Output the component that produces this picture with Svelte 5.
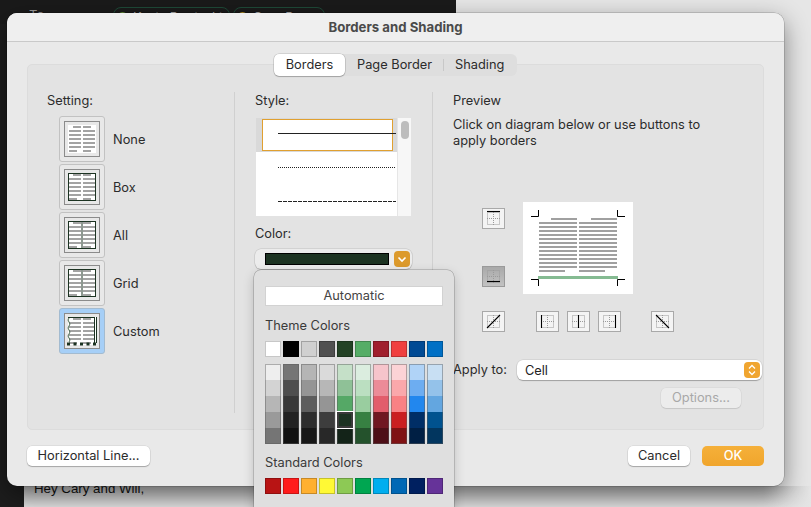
<script lang="ts">
  // Word's Borders and Shading sheet, with the colour popover left open.
  const settings = ["None", "Box", "All", "Grid", "Custom"];

  const theme = ["#ffffff", "#000000", "#d0d0d0", "#505050", "#234225", "#55ad66", "#a01f2d", "#f04040", "#004a94", "#0070c5"];
  const standard = ["#b81414", "#ff1c1c", "#ffb030", "#fff935", "#8dc955", "#00a651", "#00aeef", "#0068b5", "#002060", "#663399"];

  // one array per column, light to dark
  const shades = [
    ["#eeeeee", "#d3d3d3", "#b6b6b6", "#9a9a9a", "#757575"],
    ["#757575", "#4e4e4e", "#383838", "#222222", "#111111"],
    ["#b5b5b5", "#959595", "#5d5d5d", "#2d2d2d", "#171717"],
    ["#dadada", "#b7b7b7", "#959595", "#3d3d3d", "#282828"],
    ["#c5e0c8", "#8fc197", "#55a866", "#1c3322", "#132318"],
    ["#dbeddf", "#bbdfc1", "#99cd9f", "#378042", "#24522c"],
    ["#f6c4cb", "#ec8b98", "#e25d6c", "#701722", "#4d0f17"],
    ["#fcd3d6", "#fba8ab", "#f98184", "#ca1f21", "#7f1214"],
    ["#b0d3f7", "#6dadf1", "#2287ee", "#002e66", "#001f44"],
    ["#c8dff3", "#94c2ea", "#63a6e0", "#00528f", "#02365f"],
  ];

  const bottomButtons = [
    { kind: "diagUp", gap: 31 },
    { kind: "left", gap: 8 },
    { kind: "center", gap: 8 },
    { kind: "right", gap: 30 },
    { kind: "diagDown", gap: 0 },
  ];

  const previewRows = Array.from({ length: 12 }, (_, i) => 20 + i * 4);
  const iconRows = [1, 2, 3, 4, 5];
</script>

{#snippet pageIcon(kind: string)}
  <svg class="page-icon" width="36" height="36" viewBox="0 0 36 36">
    <rect x="0.5" y="0.5" width="35" height="35" fill="#e8e8e8" stroke="#8b8b8b" />
    <rect x="4" y="4" width="28" height="28" fill="#fff" />
    <g fill="#a3a3a3">
      <rect x="9" y="5" width="8" height="2" />
      <rect x="19" y="5" width="8" height="2" />
      {#each iconRows as n}
        <rect x="5" y={5 + n * 4} width="12" height="2" />
        <rect x="19" y={5 + n * 4} width="12" height="2" />
      {/each}
      <rect x="5" y="29" width="8" height="2" />
      <rect x="19" y="29" width="8" height="2" />
    </g>
    {#if kind === "Box" || kind === "All" || kind === "Grid"}
      <rect x="4.500" y="4.500" width="27" height="27" fill="none" stroke="#1c3322" />
    {/if}
    {#if kind === "All" || kind === "Grid"}
      <line x1="18" y1="4" x2="18" y2="32" stroke="#1c3322" />
    {/if}
    {#if kind === "Custom"}
      <line x1="4" y1="4.500" x2="31" y2="4.500" stroke="#1c3322" />
      <line x1="30.500" y1="4" x2="30.500" y2="30" stroke="#1c3322" />
      <line x1="32.500" y1="4" x2="32.500" y2="30" stroke="#1c3322" />
      <path d="M5 5q-2 2 0 4t0 4 0 4 0 4 0 4 0 4" fill="none" stroke="#4a6a50" />
      <line x1="3" y1="31" x2="32" y2="31" stroke="#1c3322" stroke-width="3" stroke-dasharray="3 3.500" />
    {/if}
  </svg>
{/snippet}

{#snippet borderIcon(kind: string)}
  <svg width="21" height="19" viewBox="0 0 21 19">
    <g fill="none" stroke="#9a9a9a" stroke-dasharray="1 1">
      <rect x="4.500" y="3.500" width="12" height="12" />
      <line x1="10.500" y1="3" x2="10.500" y2="16" />
      <line x1="4" y1="9.500" x2="17" y2="9.500" />
    </g>
    <g stroke="#000" stroke-width="1.100" fill="none">
      {#if kind === "top"}<line x1="4" y1="2.500" x2="17" y2="2.500" />{/if}
      {#if kind === "bottom"}<line x1="4" y1="14.500" x2="17" y2="14.500" />{/if}
      {#if kind === "left"}<line x1="4.500" y1="3" x2="4.500" y2="16" />{/if}
      {#if kind === "center"}<line x1="10.500" y1="3" x2="10.500" y2="16" />{/if}
      {#if kind === "right"}<line x1="16.500" y1="3" x2="16.500" y2="16" />{/if}
      {#if kind === "diagUp"}<line x1="4" y1="16" x2="17" y2="3" />{/if}
      {#if kind === "diagDown"}<line x1="4" y1="3" x2="17" y2="16" />{/if}
    </g>
  </svg>
{/snippet}

<div class="desktop">
  <div class="mail">
    <div class="mail-head">
      <span class="to">To:</span>
      <span class="chip wide"><i class="dot green"></i>Kevin Petrinski</span>
      <span class="chip"><i class="dot yellow"></i>Cary Power</span>
    </div>
    <div class="mail-body">Hey Cary and Will,</div>
  </div>

  <div class="window">
    <div class="title">Borders and Shading</div>

    <div class="content">
      <div class="tabs">
        <span class="tab active">Borders</span>
        <span class="tab">Page Border</span>
        <i class="tab-sep"></i>
        <span class="tab">Shading</span>
      </div>

      <div class="panel">
        <section class="col col-setting">
          <div class="heading">Setting:</div>
          <div class="settings">
            {#each settings as s}
              <div class="setting">
                <div class="setting-btn" class:on={s === "Custom"}>
                  {@render pageIcon(s)}
                </div>
                <span>{s}</span>
              </div>
            {/each}
          </div>
        </section>

        <section class="col col-style">
          <div class="heading">Style:</div>
          <div class="style-list">
            <div class="style-lines">
              <div class="style-row first"><i class="rule solid"></i></div>
              <div class="style-row"><i class="rule dotted"></i></div>
              <div class="style-row"><i class="rule dashed"></i></div>
            </div>
            <div class="scrollbar"><i></i></div>
          </div>
          <div class="heading color-label">Color:</div>
          <div class="color-select">
            <i class="color-well"></i>
            <span class="select-arrow">
              <svg width="10" height="7" viewBox="0 0 10 7"><path d="M1.500 1.500 5 5l3.500-3.500" fill="none" stroke="#fff" stroke-width="1.600" /></svg>
            </span>
          </div>
        </section>

        <section class="col col-preview">
          <div class="heading">Preview</div>
          <p class="hint">Click on diagram below or use buttons to apply borders</p>

          <div class="diagram">
            <div class="side-buttons">
              <div class="border-btn">{@render borderIcon("top")}</div>
              <div class="border-btn pressed">{@render borderIcon("bottom")}</div>
            </div>
            <svg class="sheet" width="110" height="92" viewBox="0 0 110 92">
              <rect width="110" height="92" fill="#fff" />
              <g fill="#a0a0a0">
                <rect x="28" y="16" width="26" height="2" />
                <rect x="68" y="16" width="26" height="2" />
                {#each previewRows as y}
                  <rect x="16" {y} width="38" height="2" />
                  <rect x="56" {y} width="38" height="2" />
                {/each}
                <rect x="16" y="68" width="26" height="2" />
                <rect x="56" y="68" width="26" height="2" />
              </g>
              <rect x="15" y="74" width="80" height="3" fill="#85bb92" />
              <path d="M8 14.500h7.500V8M102 14.500h-7.500V8M8 77.500h7.500V84M102 77.500h-7.500V84" fill="none" stroke="#000" />
            </svg>
          </div>

          <div class="bottom-buttons">
            {#each bottomButtons as b}
              <div class="border-btn" style="margin-right: {b.gap}px">{@render borderIcon(b.kind)}</div>
            {/each}
          </div>

          <div class="apply">
            <span>Apply to:</span>
            <div class="apply-select">
              <span>Cell</span>
              <span class="select-arrow bright">
                <svg width="8" height="12" viewBox="0 0 8 12"><path d="M1 4.500 4 1.500l3 3M1 7.500l3 3 3-3" fill="none" stroke="#fff" stroke-width="1.300" /></svg>
              </span>
            </div>
          </div>
          <div class="options-row"><span class="btn options">Options...</span></div>
        </section>
      </div>

      <div class="footer">
        <span class="btn hline">Horizontal Line...</span>
        <span class="spacer"></span>
        <span class="btn cancel">Cancel</span>
        <span class="btn ok">OK</span>
      </div>
    </div>

    <div class="popover">
      <div class="auto">Automatic</div>
      <div class="pop-label">Theme Colors</div>
      <div class="swatches">
        {#each theme as c}
          <i class="swatch" style="background: {c}"></i>
        {/each}
      </div>
      <div class="shades">
        {#each shades as col, x}
          <div class="shade-col">
            {#each col as c, y}
              <i class="shade" class:picked={x === 4 && y === 3} style="background: {c}"></i>
            {/each}
          </div>
        {/each}
      </div>
      <div class="pop-label std">Standard Colors</div>
      <div class="swatches">
        {#each standard as c}
          <i class="swatch" style="background: {c}"></i>
        {/each}
      </div>
    </div>
  </div>
</div>

<style>
  :global(body) {
    margin: 0;
    background: #e4e4e4;
  }
  * {
    box-sizing: border-box;
  }
  i {
    display: block;
    font-style: normal;
  }
  .desktop {
    position: relative;
    width: 811px;
    height: 507px;
    overflow: hidden;
    font-family: Inter, "Noto Sans", sans-serif;
    font-size: 12.800px;
    color: #2b2b2b;
    background: #e6e6e6;
  }

  /* the mail window behind the sheet */
  .mail {
    width: 456px;
    height: 100%;
    display: flex;
    flex-direction: column;
    background: #1d1d1d;
  }
  .mail-head {
    height: 24px;
    display: flex;
    align-items: flex-start;
    gap: 3px;
    padding: 7px 0 0 29px;
    background: #1a1a1a;
    color: #999;
  }
  .to {
    width: 81px;
    font-size: 13px;
  }
  .chip {
    width: 92px;
    height: 20px;
    display: flex;
    align-items: center;
    gap: 5px;
    padding-left: 3px;
    border: 1px solid #1e4a38;
    border-radius: 8px;
    color: #bbb;
    white-space: nowrap;
    overflow: hidden;
  }
  .chip.wide {
    width: 117px;
  }
  .dot {
    width: 11px;
    height: 11px;
    flex: none;
    border-radius: 50%;
  }
  .green {
    background: #6b9b3a;
  }
  .yellow {
    background: #c9a227;
  }
  /* only the last 21px show below the sheet; the tight line-height keeps the
     text cut off by the sheet's bottom edge, like in the real window */
  .mail-body {
    margin: auto 0 0 24px;
    height: 21px;
    width: 787px;
    flex: none;
    padding-left: 10px;
    line-height: 5px;
    color: #111;
    font-family: "Liberation Sans", sans-serif;
    font-size: 13.300px;
    background:
      linear-gradient(to right, transparent 94%, #e4e4e4),
      linear-gradient(#b4b4b4, #dedede);
  }

  .window {
    position: absolute;
    left: 7px;
    top: 13px;
    width: 777px;
    height: 473px;
    background: #e9e9e9;
    border-radius: 10px;
    box-shadow: 0 8px 24px rgba(0, 0, 0, 0.45), 0 0 0 0.5px rgba(0, 0, 0, 0.25);
  }
  .title {
    height: 29px;
    display: flex;
    align-items: center;
    justify-content: center;
    background: #efefef;
    border-bottom: 1px solid #c9c9c9;
    border-radius: 10px 10px 0 0;
    font-size: 13.200px;
    font-weight: 700;
    color: #4a4a4a;
  }
  .content {
    padding: 12px 20px 0;
  }

  .tabs {
    position: relative;
    z-index: 1;
    width: 243px;
    height: 22px;
    margin: 0 auto -12px;
    display: flex;
    align-items: center;
    background: #dedede;
    border-radius: 6px;
  }
  .tab {
    padding: 0 11px 2px;
    white-space: nowrap;
  }
  .tab.active {
    width: 71px;
    height: 22px;
    padding: 0 0 2px;
    margin-right: 1px;
    display: flex;
    align-items: center;
    justify-content: center;
    background: #fff;
    border-radius: 5px;
    box-shadow: 0 0 0 0.5px rgba(0, 0, 0, 0.2), 0 1px 1px rgba(0, 0, 0, 0.2);
  }
  .tab-sep {
    width: 1px;
    height: 12px;
    background: #c8c8c8;
  }

  .panel {
    height: 366px;
    display: grid;
    grid-template-columns: 207px 198px 1fr;
    padding-top: 27px;
    background: #e3e3e3;
    border: 1px solid #dcdcdc;
    border-radius: 5px;
  }
  .col {
    height: 321px;
  }
  .col-setting {
    padding-left: 19px;
    border-right: 1px solid #d0d0d0;
  }
  .col-style {
    padding-left: 20px;
    border-right: 1px solid #d0d0d0;
    position: relative;
  }
  .col-preview {
    padding-left: 20px;
  }
  .heading {
    height: 16px;
    line-height: 18px;
  }

  .settings {
    margin: 8px 0 0 12px;
    display: flex;
    flex-direction: column;
    gap: 2px;
  }
  .setting {
    display: flex;
    align-items: center;
    gap: 8px;
  }
  .setting-btn {
    width: 46px;
    height: 46px;
    display: flex;
    align-items: center;
    justify-content: center;
    border: 1px solid #c2c2c2;
    border-radius: 3px;
    background: #e8e8e8;
  }
  .setting-btn.on {
    background: #a6cff7;
    border-color: #a3bbd0;
  }

  .style-list {
    width: 155px;
    height: 98px;
    margin: 10px 0 0 1px;
    display: flex;
    background: #fff;
  }
  .style-lines {
    flex: 1;
    overflow: hidden;
  }
  .style-row {
    height: 34px;
    display: flex;
    align-items: center;
    padding: 0 0 4px 22px;
  }
  .style-row.first {
    background: #d9d9d9;
    padding-left: 16px;
    position: relative;
  }
  .style-row.first::before {
    content: "";
    position: absolute;
    inset: 1px 5px 1px 6px;
    background: #fff;
    border: 1px solid #e0a030;
    width: 129px;
  }
  .style-row.first .rule {
    position: relative;
    margin-left: 6px;
  }
  .rule {
    width: 118px;
    height: 1px;
    flex: none;
  }
  .solid {
    background: #222;
  }
  .dotted {
    background: repeating-linear-gradient(to right, #222 0 1px, transparent 1px 2px);
  }
  .dashed {
    background: repeating-linear-gradient(to right, #222 0 4px, transparent 4px 5px);
  }
  .scrollbar {
    width: 14px;
    padding: 3px 3px;
    background: #f7f7f7;
    border-left: 1px solid #e6e6e6;
  }
  .scrollbar i {
    width: 8px;
    height: 18px;
    border-radius: 4px;
    background: #bdbdbd;
  }

  .color-label {
    margin-top: 9px;
  }
  .color-select {
    width: 157px;
    height: 20px;
    margin-top: 8px;
    display: flex;
    align-items: center;
    padding: 0 2px 0 10px;
    background: #ececec;
    border-radius: 6px;
    box-shadow: 0 0 0 0.5px rgba(0, 0, 0, 0.15), 0 1px 1px rgba(0, 0, 0, 0.15);
  }
  .color-well {
    width: 124px;
    height: 12px;
    background: #1c3322;
    border: 1px solid #000;
  }
  .select-arrow {
    width: 16px;
    height: 16px;
    margin-left: auto;
    display: flex;
    align-items: center;
    justify-content: center;
    border-radius: 4px;
    background: #dc9a2c;
  }
  .select-arrow.bright {
    background: #f0a530;
  }

  .hint {
    width: 260px;
    margin: 9px 0 0;
    line-height: 16px;
  }
  .diagram {
    margin-top: 53px;
    display: flex;
    align-items: flex-start;
  }
  .side-buttons {
    margin: 6px 18px 0 29px;
    display: flex;
    flex-direction: column;
    gap: 37px;
  }
  .border-btn {
    width: 23px;
    height: 21px;
    flex: none;
    border: 1px solid #a9a9a9;
    background: #f4f4f4;
  }
  .border-btn svg {
    display: block;
  }
  .border-btn.pressed {
    background: linear-gradient(#a9a9a9, #c2c2c2);
    border-color: #9a9a9a;
  }
  .sheet {
    display: block;
  }
  .bottom-buttons {
    margin: 17px 0 0 29px;
    display: flex;
  }
  .apply {
    margin-top: 28px;
    display: flex;
    align-items: center;
    gap: 10px;
  }
  .apply > span {
    padding-bottom: 1px;
  }
  .apply-select {
    width: 245px;
    height: 20px;
    display: flex;
    align-items: center;
    padding: 0 2px 0 8px;
    background: #fff;
    border-radius: 6px;
    color: #222;
    box-shadow: 0 0 0 0.5px rgba(0, 0, 0, 0.12), 0 1px 1px rgba(0, 0, 0, 0.25);
  }
  .options-row {
    margin: 8px 0 0 208px;
  }
  .btn {
    height: 20px;
    padding-bottom: 1px;
    display: inline-flex;
    align-items: center;
    justify-content: center;
    border-radius: 5px;
    background: #fff;
    box-shadow: 0 0 0 0.5px rgba(0, 0, 0, 0.1), 0 1px 1px rgba(0, 0, 0, 0.25);
    white-space: nowrap;
  }
  .options {
    width: 80px;
    background: #ececec;
    color: #a8a8a8;
    box-shadow: 0 0 0 0.5px rgba(0, 0, 0, 0.06), 0 1px 1px rgba(0, 0, 0, 0.1);
  }

  .footer {
    margin-top: 16px;
    display: flex;
    gap: 12px;
  }
  .spacer {
    flex: 1;
  }
  .hline {
    width: 123px;
  }
  .cancel {
    width: 62px;
  }
  .ok {
    width: 62px;
    background: linear-gradient(#f5b03a, #f0a52c);
    color: #fff;
    font-weight: 500;
    box-shadow: none;
  }

  .popover {
    position: absolute;
    left: 247px;
    top: 257px;
    width: 200px;
    height: 260px;
    padding: 16px 11px 0;
    background: #dfdfdf;
    border-radius: 7px;
    box-shadow: 0 0 0 0.5px rgba(0, 0, 0, 0.3), 0 4px 12px rgba(0, 0, 0, 0.2);
  }
  .auto {
    height: 20px;
    padding-bottom: 2px;
    display: flex;
    align-items: center;
    justify-content: center;
    background: #fff;
    border: 1px solid #d2d2d2;
    color: #444;
  }
  .pop-label {
    height: 16px;
    line-height: 16px;
    margin: 12px 0 7px;
    color: #3a3a3a;
  }
  .pop-label.std {
    margin: 11px 0 7px;
  }
  .swatches,
  .shades {
    display: flex;
    gap: 2px;
  }
  .swatch {
    width: 16px;
    height: 16px;
    box-shadow: inset 0 0 0 1px rgba(0, 0, 0, 0.22);
  }
  .shades {
    margin-top: 7px;
  }
  .shade-col {
    position: relative;
    width: 16px;
    height: 80px;
  }
  .shade-col::after {
    content: "";
    position: absolute;
    inset: 0;
    border: 1px solid rgba(90, 90, 90, 0.45);
  }
  .shade {
    height: 16px;
  }
  .shade.picked {
    position: relative;
    z-index: 1;
    outline: 1px solid #fff;
    box-shadow: 0 0 0 2px #3a3a3a inset;
  }
</style>
